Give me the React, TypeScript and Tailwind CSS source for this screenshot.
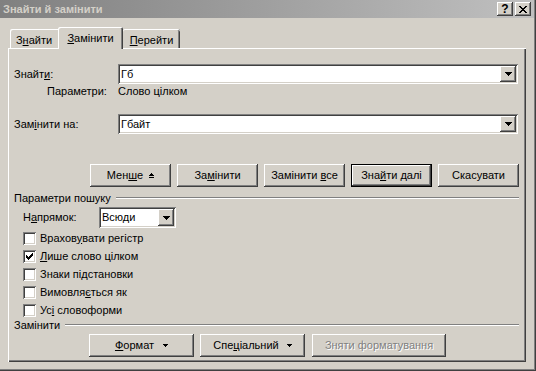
import React from 'react';

const raised = 'shadow-[inset_-1px_-1px_#404040,inset_1px_1px_#ffffff,inset_-2px_-2px_#808080]';
const sunken = 'shadow-[inset_1px_1px_#808080,inset_-1px_-1px_#ffffff,inset_2px_2px_#404040,inset_-2px_-2px_#d4d0c8]';

// tiny pixel glyphs, one string per row
const Pixels = ({ rows, color = '#000' }: { rows: string[]; color?: string }) => (
  <svg width={rows[0].length} height={rows.length} shapeRendering="crispEdges" className="block">
    {rows.flatMap((r, y) =>
      r.split('').map((c, x) =>
        c === 'X' ? <rect key={`${x}-${y}`} x={x} y={y} width={1} height={1} fill={color} /> : null
      )
    )}
  </svg>
);

const CHECK = ['......X', '.....XX', 'X...XXX', 'XX.XXX.', 'XXXXX..', '.XXX...', '..X....'];
const CLOSE = ['XX....XX', '.XX..XX.', '..XXXX..', '...XX...', '..XXXX..', '.XX..XX.', 'XX....XX'];
const DOWN = ['XXXXXXX', '.XXXXX.', '..XXX..', '...X...'];
const SMALL_DOWN = ['XXXXX', '.XXX.', '..X..'];
const LESS = ['..X..', '.XXX.', 'XXXXX', '.....', 'XXXXX'];

const U = ({ children }: { children: React.ReactNode }) => <u className="underline">{children}</u>;

const DropBtn = () => (
  <div className={`w-[16px] self-stretch bg-[#d4d0c8] ${raised} flex items-center justify-center`}>
    <Pixels rows={DOWN} />
  </div>
);

const Combo = ({ value, className }: { value: string; className: string }) => (
  <div className={`${className} bg-white ${sunken} flex p-[2px]`}>
    <span className="flex-1 flex items-center pl-[1px]">{value}</span>
    <DropBtn />
  </div>
);

const Btn = ({
  children,
  w,
  def,
  disabled,
}: {
  children: React.ReactNode;
  w: string;
  def?: boolean;
  disabled?: boolean;
}) => (
  <div
    className={`${w} h-[23px] flex items-center justify-center ${
      def
        ? 'shadow-[inset_0_0_0_1px_#000000,inset_-2px_-2px_#404040,inset_2px_2px_#ffffff,inset_-3px_-3px_#808080]'
        : raised
    } ${disabled ? 'text-[#808080] [text-shadow:1px_1px_0_#ffffff]' : ''}`}
  >
    {children}
  </div>
);

const Check = ({ checked, children }: { checked?: boolean; children: React.ReactNode }) => (
  <div className="h-[18px] flex items-center pl-[9px]">
    <div className={`w-[13px] h-[13px] bg-white ${sunken} flex items-center justify-center`}>
      {checked && <Pixels rows={CHECK} />}
    </div>
    <span className="ml-[4px]">{children}</span>
  </div>
);

const Group = ({ title }: { title: string }) => (
  <div className="h-[12px] flex items-center">
    <span>{title}</span>
    <div className="flex-1 ml-[5px] h-[2px] border-t border-t-[#808080] border-b border-b-white" />
  </div>
);

const TitleBar = () => (
  <div className="w-[534px] h-[18px] bg-gradient-to-r from-[#808080] to-[#c0c0c0] flex items-center pl-[3px] pr-[3px]">
    <span className="flex-1 font-bold text-[#d4d0c8]">Знайти й замінити</span>
    <div className="flex gap-[2px]">
      <div className={`w-[16px] h-[14px] bg-[#d4d0c8] ${raised} flex items-center justify-center font-bold text-[12px] leading-none pb-[1px]`}>
        ?
      </div>
      <div className={`w-[16px] h-[14px] bg-[#d4d0c8] ${raised} flex items-center justify-center`}>
        <Pixels rows={CLOSE} />
      </div>
    </div>
  </div>
);

const Tabs = () => (
  <div className="flex items-end h-[21px] pl-[2px]">
    <div className="w-[48px] h-[19px] pt-[5px] text-center rounded-tl-[2px] shadow-[inset_1px_1px_#ffffff]">
      З<U>н</U>айти
    </div>
    <div className="relative z-10 w-[65px] h-[22px] -mb-px pt-[5px] text-center bg-[#d4d0c8] rounded-t-[2px] shadow-[inset_1px_1px_#ffffff,inset_-1px_0_#404040,inset_-2px_0_#808080]">
      <U>З</U>амінити
    </div>
    <div className="w-[57px] h-[19px] pt-[5px] text-center rounded-t-[2px] shadow-[inset_0_1px_#ffffff,inset_-1px_0_#404040,inset_-2px_0_#808080]">
      <U>П</U>ерейти
    </div>
  </div>
);

export default function App() {
  return (
    <div className="w-[536px] h-[371px] bg-[#d4d0c8] text-black text-[11px] leading-[13px] font-['Liberation_Sans',Arial,sans-serif] shadow-[inset_-1px_-1px_#404040,inset_-2px_-2px_#808080] flex flex-col">
      <TitleBar />
      <div className="pl-[8px] mt-[9px]">
        <Tabs />
        <div className="w-[518px] h-[314px] flex flex-col pt-[16px] pl-[6px] pr-[7px] shadow-[inset_1px_1px_#ffffff,inset_-1px_-1px_#404040,inset_-2px_-2px_#808080]">
          <div className="flex items-center h-[20px] mr-[1px]">
            <span className="w-[104px]">
              Знайт<U>и</U>:
            </span>
            <Combo value="Гб" className="flex-1 h-[20px]" />
          </div>
          <div className="flex items-center h-[14px]">
            <span className="w-[104px] pl-[33px]">Параметри:</span>
            <span>Слово цілком</span>
          </div>
          <div className="flex items-center h-[20px] mt-[16px] mr-[1px]">
            <span className="w-[104px]">
              Зам<U>і</U>нити на:
            </span>
            <Combo value="Гбайт" className="flex-1 h-[20px]" />
          </div>
          <div className="flex justify-end gap-[6px] mt-[30px]">
            <Btn w="w-[81px]">
              <span>
                Мен<U>ш</U>е
              </span>
              <span className="ml-[6px]">
                <Pixels rows={LESS} />
              </span>
            </Btn>
            <Btn w="w-[81px]">
              <span>
                За<U>м</U>інити
              </span>
            </Btn>
            <Btn w="w-[81px]">
              <span>
                Замінити <U>в</U>се
              </span>
            </Btn>
            <Btn w="w-[81px]" def>
              <span>
                Зна<U>й</U>ти далі
              </span>
            </Btn>
            <Btn w="w-[81px]">
              <span>Скасувати</span>
            </Btn>
          </div>
          <div className="mt-[5px]">
            <Group title="Параметри пошуку" />
          </div>
          <div className="flex items-center h-[21px] mt-[3px] pl-[9px]">
            <span className="w-[76px]">
              Н<U>а</U>прямок:
            </span>
            <Combo value="Всюди" className="w-[77px] h-[21px]" />
          </div>
          <div className="mt-[1px] flex flex-col">
            <Check>
              Врахов<U>у</U>вати регістр
            </Check>
            <Check checked>
              <U>Л</U>ише слово цілком
            </Check>
            <Check>
              Знаки пі<U>д</U>становки
            </Check>
            <Check>
              Вимовля<U>є</U>ться як
            </Check>
            <Check>
              Ус<U>і</U> словоформи
            </Check>
          </div>
          <Group title="Замінити" />
          <div className="flex mt-[3px] ml-[75px]">
            <Btn w="w-[105px]">
              <span>
                <U>Ф</U>ормат
              </span>
              <span className="ml-[9px]">
                <Pixels rows={SMALL_DOWN} />
              </span>
            </Btn>
            <div className="w-[6px]" />
            <Btn w="w-[105px]">
              <span>
                Спе<U>ц</U>іальний
              </span>
              <span className="ml-[8px]">
                <Pixels rows={SMALL_DOWN} />
              </span>
            </Btn>
            <div className="w-[7px]" />
            <Btn w="w-[134px]" disabled>
              <span>Зняти форматування</span>
            </Btn>
          </div>
        </div>
      </div>
    </div>
  );
}
